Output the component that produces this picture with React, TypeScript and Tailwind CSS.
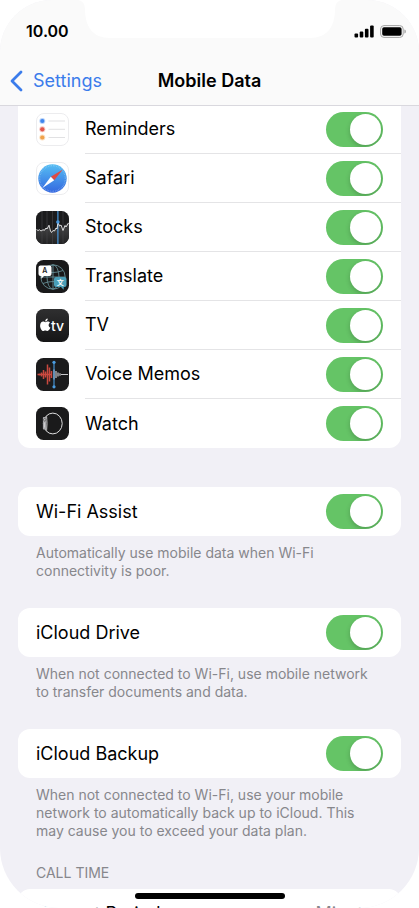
import React, { useState } from 'react'

const RemindersIcon = () => (
    <svg viewBox="0 0 33 33" className="size-[33px] shrink-0" aria-hidden="true">
        <rect x="0.5" y="0.5" width="32" height="32" rx="7.5" fill="#fff" stroke="#ececee" />
        {[
            { y: 8, color: '#3f86ee' },
            { y: 16.3, color: '#e2564a' },
            { y: 24.5, color: '#f0a24a' },
        ].map((dot) => (
            <g key={dot.y}>
                <circle cx="6.3" cy={dot.y} r="3" fill={dot.color} opacity="0.35" />
                <circle cx="6.3" cy={dot.y} r="2.1" fill={dot.color} />
                <path d={`M12.5 ${dot.y}H29`} stroke="#dedee0" strokeWidth="0.9" />
            </g>
        ))}
    </svg>
)

const SafariIcon = () => (
    <svg viewBox="0 0 33 33" className="size-[33px] shrink-0" aria-hidden="true">
        <defs>
            <linearGradient id="safari" x1="0" y1="0" x2="0" y2="1">
                <stop offset="0" stopColor="#55bdf3" />
                <stop offset="1" stopColor="#3468e0" />
            </linearGradient>
        </defs>
        <rect x="0.5" y="0.5" width="32" height="32" rx="7.5" fill="#fff" stroke="#ececee" />
        <circle cx="16.5" cy="16.5" r="14.2" fill="url(#safari)" />
        <circle cx="16.5" cy="16.5" r="12.8" fill="none" stroke="#fff" strokeOpacity="0.4" strokeWidth="1.3" strokeDasharray="0.5 1.18" />
        <path d="M26.8 7.4L14.8 14.7L18.2 18.3Z" fill="#de4b44" />
        <path d="M6.4 26L14.8 14.7L18.2 18.3Z" fill="#fff" />
    </svg>
)

const StocksIcon = () => (
    <svg viewBox="0 0 33 33" className="size-[33px] shrink-0" aria-hidden="true">
        <defs>
            <linearGradient id="stocks" x1="0" y1="0" x2="0" y2="1">
                <stop offset="0.4" stopColor="#3a3a3b" />
                <stop offset="1" stopColor="#222223" />
            </linearGradient>
        </defs>
        <rect width="33" height="33" rx="7.5" fill="#1c1c1d" />
        <path d="M0 19L5 20L9 17.5L13 15L15 21L20 18L22 11L27 19L29 14L33 11V25.5a7.5 7.5 0 0 1-7.5 7.5H7.5a7.5 7.5 0 0 1-7.5-7.5Z" fill="url(#stocks)" />
        <path d="M6 0.5V32.5M11 0V33M16.5 0V33M27 0.5V32.5" stroke="#47474a" strokeWidth="0.6" />
        <path d="M21.9 0V33" stroke="#4897dc" strokeWidth="1.2" />
        <path d="M0.5 18.5L2 19.5L3.500 18.8L5 20L7 18.8L8.500 19.3L10 17L11 18L13 14.2L14.500 20L15.500 21.5L17 19.5L18.500 20L20 17L21 18L22 11.5L23.500 15L25 14L27 19.5L29 14.5L30 16L32.500 12" fill="none" stroke="#eee" strokeWidth="0.9" strokeLinejoin="round" />
        <circle cx="21.9" cy="11" r="1.8" fill="#4897dc" />
    </svg>
)

const TranslateIcon = () => (
    <svg viewBox="0 0 33 33" className="size-[33px] shrink-0" aria-hidden="true">
        <rect width="33" height="33" rx="7.5" fill="#19191a" />
        <g fill="none" stroke="#648c94" strokeWidth="0.9">
            <circle cx="17" cy="17" r="12.2" />
            <ellipse cx="17" cy="17" rx="6" ry="12.2" />
            <path d="M17 4.8V29.2M4.8 17H29.2M7 10.5Q17 14.5 27 10.5M7 23.5Q17 19.5 27 23.5" />
        </g>
        <path d="M4.500 5.5H13.5a2 2 0 0 1 2 2V14a2 2 0 0 1-2 2H8L5.3 18.8V16H4.5a2 2 0 0 1-2-2V7.5a2 2 0 0 1 2-2Z" fill="#fff" />
        <text x="8.9" y="13.2" fontSize="7" fontWeight="600" fontFamily="Inter, sans-serif" textAnchor="middle" fill="#222">A</text>
        <path d="M20 17H28.5a2 2 0 0 1 2 2V25a2 2 0 0 1-2 2H27.7V29.8L25 27H20a2 2 0 0 1-2-2V19a2 2 0 0 1 2-2Z" fill="#4a9fb8" />
        <text x="24.2" y="24.6" fontSize="7" fontWeight="700" fontFamily="'Noto Sans CJK SC', sans-serif" textAnchor="middle" fill="#fff">文</text>
    </svg>
)

const TvIcon = () => (
    <svg viewBox="0 0 33 33" className="size-[33px] shrink-0" aria-hidden="true">
        <defs>
            <linearGradient id="tv" x1="0" y1="0" x2="0" y2="1">
                <stop offset="0" stopColor="#2f2f30" />
                <stop offset="1" stopColor="#151516" />
            </linearGradient>
        </defs>
        <rect width="33" height="33" rx="7.5" fill="url(#tv)" />
        <path d="M9.3 13.2c.9 0 1.5-.7 2.4-.7 1 0 1.8.5 2.3 1.2-2 1.3-1.7 4.1.4 4.9-.5 1.500-1.700 3.400-2.900 3.400-.8 0-1.200-.5-2.200-.5s-1.400.5-2.200.5c-1.300 0-3-2.900-3-5.300 0-2.500 1.500-4.100 3.100-4.100.9 0 1.500.6 2.100.6ZM9.200 12.400c-.1-1.600 1.100-2.900 2.500-3 .2 1.600-1.100 3-2.500 3Z" fill="#fff" />
        <text x="15" y="21.8" fontSize="14" fontWeight="500" fontFamily="Inter, sans-serif" fill="#fff">tv</text>
    </svg>
)

const VoiceMemosIcon = () => (
    <svg viewBox="0 0 33 33" className="size-[33px] shrink-0" aria-hidden="true">
        <rect width="33" height="33" rx="7.5" fill="#1b1b1c" />
        <path d="M1.5 16.5H16M3.5 15.5V17.5M5.5 14.5V18.5M7.5 12V21M9.5 13.5V19.5M11.5 6.5V26.5M13.5 9.5V23.5M15.5 13V20" stroke="#c9493f" strokeWidth="1.5" />
        <path d="M18 11.5V21.5M20 13V20M22 14.5V18.5M24 15.3V17.7M25 16.5H32" stroke="#c9c9cb" strokeWidth="1.2" />
        <path d="M18 4.5V29" stroke="#4a9ce0" strokeWidth="1.1" />
        <circle cx="18" cy="4.3" r="1.6" fill="#4a9ce0" />
        <circle cx="18" cy="28.8" r="1.6" fill="#4a9ce0" />
    </svg>
)

const WatchIcon = () => (
    <svg viewBox="0 0 33 33" className="size-[33px] shrink-0" aria-hidden="true">
        <rect width="33" height="33" rx="7.5" fill="#1a1a1b" />
        <ellipse cx="16.8" cy="16.5" rx="9.4" ry="10.4" fill="none" stroke="#dededf" strokeWidth="1" />
        <path d="M7.6 10H10.4V22.500H7.6Q6.900 22.500 6.900 21.5V11Q6.900 10 7.600 10Z" fill="#a9a9ad" />
        <path d="M10.6 9.500Q11.600 16.500 10.600 23.5" fill="none" stroke="#e8e8ea" strokeWidth="0.7" />
        <circle cx="8.8" cy="12.8" r="1.2" fill="#d5d5d8" stroke="#333" strokeWidth="0.6" />
        <path d="M8.500 15.500V20.5" stroke="#d5d5d8" strokeWidth="0.8" />
    </svg>
)

const apps = [
    { name: 'Reminders', icon: <RemindersIcon /> },
    { name: 'Safari', icon: <SafariIcon /> },
    { name: 'Stocks', icon: <StocksIcon /> },
    { name: 'Translate', icon: <TranslateIcon /> },
    { name: 'TV', icon: <TvIcon /> },
    { name: 'Voice Memos', icon: <VoiceMemosIcon /> },
    { name: 'Watch', icon: <WatchIcon /> },
]

const options = [
    { name: 'Wi-Fi Assist', note: 'Automatically use mobile data when Wi-Fi connectivity is poor.' },
    { name: 'iCloud Drive', note: 'When not connected to Wi-Fi, use mobile network to transfer documents and data.' },
    { name: 'iCloud Backup', note: 'When not connected to Wi-Fi, use your mobile network to automatically back up to iCloud. This may cause you to exceed your data plan.' },
]

const Switch = ({ id }: { id: string }) => {
    const [on, setOn] = useState(true);

    return (
        <input
            type="checkbox"
            role="switch"
            id={id}
            checked={on}
            onChange={(e) => setOn(e.target.checked)}
            className="h-[35px] w-[57px] shrink-0 cursor-pointer appearance-none overflow-hidden rounded-full bg-[#e9e9eb] p-[2px] before:block before:size-[31px] before:rounded-full before:bg-white before:shadow-[0_2px_5px_rgba(0,0,0,0.2)] checked:bg-[#65c466] checked:before:translate-x-[22px]"
        />
    )
}

const StatusBar = () => (
    <div className="flex h-[62px] items-center justify-between pr-[13px] pl-[26px]">
        <span className="text-base font-semibold">10.00</span>
        <div className="flex items-center gap-[6px]">
            <svg viewBox="0 0 20 13" className="h-[13px] w-5" aria-hidden="true">
                <rect x="0.5" y="8.5" width="3.6" height="4" rx="1" />
                <rect x="5.7" y="6.5" width="3.6" height="6" rx="1" />
                <rect x="10.9" y="3.8" width="3.6" height="8.7" rx="1" />
                <rect x="16.1" y="0.5" width="3.6" height="12" rx="1" />
            </svg>
            <svg viewBox="0 0 26 13" className="h-[13px] w-[26px]" aria-hidden="true">
                <rect x="0.6" y="0.6" width="22.6" height="11.8" rx="3.4" fill="none" stroke="#a3a3a3" />
                <rect x="2.2" y="2.2" width="19.4" height="8.6" rx="1.8" />
                <path d="M24.4 4.5v4c1-.3 1.5-1.1 1.5-2s-.5-1.7-1.5-2Z" fill="#a3a3a3" />
            </svg>
        </div>
    </div>
)

const App = () => {
    return (
        <div className="h-screen bg-white font-['Inter',sans-serif] text-black">
            <div className="relative flex h-full flex-col overflow-hidden rounded-t-[52px] rounded-b-[60px] bg-[#f1f0f6]">
                <header className="relative z-10 shrink-0 border-b border-[#d9d8de] bg-[#fafafa]">
                    <svg viewBox="0 0 264 38" className="absolute top-0 left-1/2 h-[38px] w-[264px] -translate-x-1/2" aria-hidden="true">
                        <path d="M0 0Q7 1 7 9C7 27 15 38 32 38H232C249 38 257 27 257 9Q257 1 264 0Z" fill="#fff" />
                    </svg>
                    <StatusBar />
                    <nav className="grid h-[43px] grid-cols-[1fr_auto_1fr] items-center px-[9px] pb-[5px] text-lg">
                        <a href="#settings" className="flex items-center gap-[10px] text-[#3b7ceb]">
                            <svg viewBox="0 0 14 22" className="h-[22px] w-[14px]" aria-hidden="true">
                                <path d="M12 2L3 11L12 20" fill="none" stroke="currentColor" strokeWidth="2.8" strokeLinecap="round" strokeLinejoin="round" />
                            </svg>
                            Settings
                        </a>
                        <h1 className="font-semibold">Mobile Data</h1>
                    </nav>
                </header>

                <main className="-mt-px min-h-0 flex-1 overflow-hidden px-[18px]">
                    <ul className="rounded-b-xl bg-white pl-[18px]">
                        {apps.map((app) => (
                            <li key={app.name} className="group flex h-[49px] items-center gap-4">
                                {app.icon}
                                <div className="flex h-full flex-1 items-center justify-between border-b border-[#e4e4e6] pr-[18px] group-last:border-b-0">
                                    <label htmlFor={app.name} className="text-lg">{app.name}</label>
                                    <Switch id={app.name} />
                                </div>
                            </li>
                        ))}
                    </ul>

                    <div className="flex flex-col gap-7 pt-[39px]">
                        {options.map((option) => (
                            <section key={option.name}>
                                <div className="flex h-[49px] items-center justify-between rounded-xl bg-white px-[18px]">
                                    <label htmlFor={option.name} className="text-lg">{option.name}</label>
                                    <Switch id={option.name} />
                                </div>
                                <p className="px-[18px] pt-2 text-sm leading-[18px] text-[#87878c]">{option.note}</p>
                            </section>
                        ))}
                    </div>

                    <h2 className="px-[18px] pt-6 pb-[7px] text-sm leading-[18px] text-[#87878c]">CALL TIME</h2>
                    <div className="flex h-[49px] items-center justify-between rounded-t-xl bg-white px-[18px] text-lg">
                        <span>Current Period</span>
                        <span className="text-[#87878c]">Minutes</span>
                    </div>
                </main>

                {/* home indicator */}
                <div className="absolute bottom-[9px] left-1/2 h-[6px] w-[150px] -translate-x-1/2 rounded-full bg-black" />
            </div>
        </div>
    )
}

export default App
